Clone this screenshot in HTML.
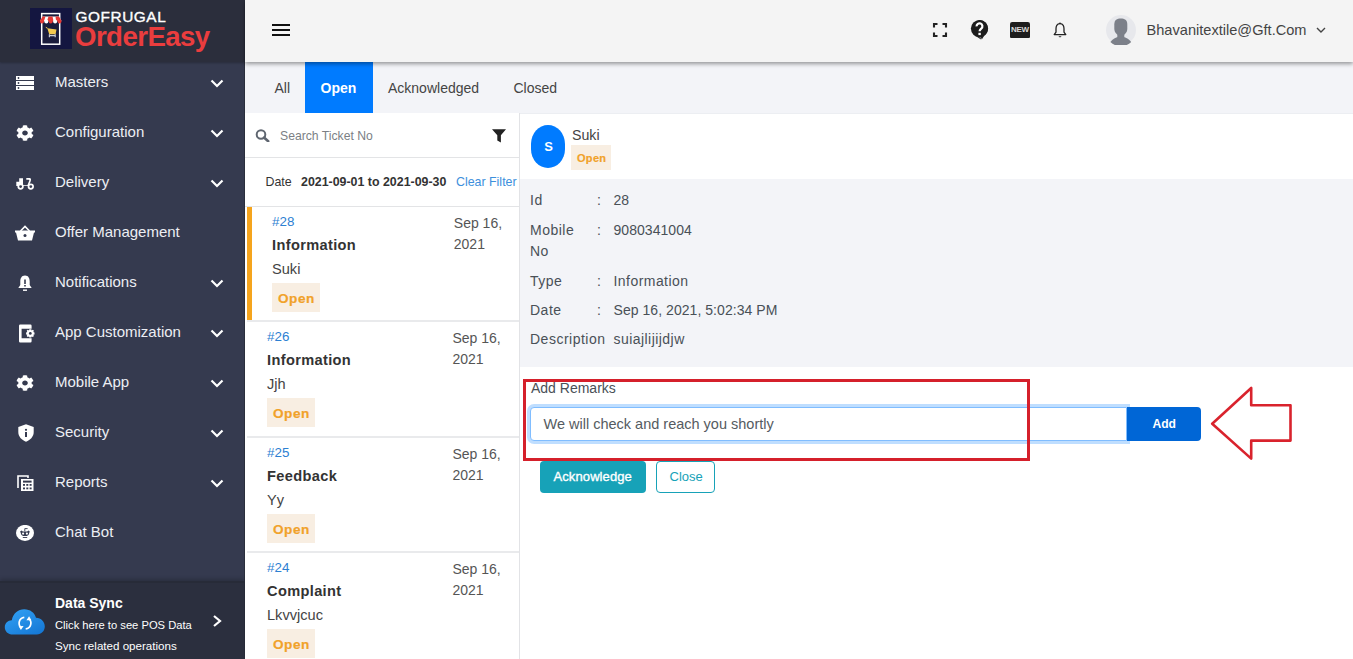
<!DOCTYPE html>
<html><head><meta charset="utf-8">
<style>
*{box-sizing:border-box;margin:0;padding:0}
html,body{width:1353px;height:659px;overflow:hidden;font-family:"Liberation Sans",sans-serif;background:#fff;color:#333;position:relative}
.t{position:absolute;line-height:1;white-space:nowrap;z-index:3}
svg{z-index:3}
#side{position:absolute;left:0;top:0;width:245px;height:659px;background:#353a4f;border-right:1px solid #2a2e3c}
#side .shd{position:absolute;left:0;top:0;width:244px;height:62px;background:#2b2e3c;box-shadow:0 1px 2px rgba(0,0,0,.25)}
.mi{position:absolute;left:0;width:244px;height:50px}
.mi svg.ic{position:absolute}
.mi svg.ch{position:absolute;left:210px;top:22px}
.ds{position:absolute;left:0;top:581px;width:244px;height:78px;background:#2b2f3e;border-top:2px solid #272b38;box-shadow:0 -2px 4px rgba(0,0,0,.2)}
#top{position:absolute;left:245px;top:0;width:1108px;height:62px;background:#f4f4f4;box-shadow:0 2px 4px rgba(0,0,0,.38);z-index:2}
#tabs{position:absolute;left:245px;top:62px;width:1108px;height:51px;background:#f3f4f8}
.opentab{position:absolute;left:305px;top:62px;width:68px;height:51px;background:#007bff}
#list{position:absolute;left:245px;top:113px;width:275px;height:546px;background:#fff;border-right:1px solid #e2e3e6}
.hl{position:absolute;left:245px;width:274px;height:1px;background:#e3e4e6}
.sep{position:absolute;left:247px;width:272px;height:2px;background:#e9eaec}
.obar{position:absolute;left:247px;width:5px;height:115px;background:#f5a41d}
.badge{position:absolute;background:#f8eee2}
#dhead{position:absolute;left:520px;top:113px;width:833px;height:66px;background:#fff;border-top:1px solid #eceef2}
#dinfo{position:absolute;left:520px;top:179px;width:833px;height:188px;background:#f3f4f8}
.avatar{position:absolute;left:530.5px;top:124.5px;width:34.5px;height:43.5px;border-radius:17px / 19px;background:#007bff}
.inp{position:absolute;left:530px;top:407px;width:597px;height:34px;border:1px solid #80bdff;border-radius:4px 0 0 4px;box-shadow:0 0 0 3px rgba(0,123,255,.25);background:#fff}
.addbtn{position:absolute;left:1127px;top:407px;width:74px;height:34px;background:#0066d6;border-radius:0 4px 4px 0}
.ackbtn{position:absolute;left:540px;top:461px;width:106px;height:31.5px;background:#17a2b8;border-radius:4px}
.closebtn{position:absolute;left:656px;top:461px;width:59px;height:31.5px;border:1px solid #17a2b8;border-radius:4px;background:#fff}
.redbox{position:absolute;left:522.5px;top:379px;width:507px;height:81.5px;border:3px solid #d5202b}

</style></head><body>
<div id="side">
<div class="shd"></div>
<svg style="position:absolute;left:30px;top:8px" width="42" height="41" viewBox="0 0 42 41">
<rect x="0" y="0" width="42" height="41" fill="#141640"/>
<rect x="11.7" y="5.6" width="18" height="30.6" fill="#1a1c3c" stroke="#fff" stroke-width="1.5"/>
<path d="M10 13 L12.5 8.5 H29 L31.5 13 Z" fill="#fff"/>
<path d="M10 13 L12.5 8.5 H15.5 L14 13 Z M17 13 L18.5 8.5 H22.5 L23.5 13 Z M26 13 L25.5 8.5 H29 L31.5 13 Z" fill="#e53935"/>
<circle cx="12" cy="13.5" r="2" fill="#e53935"/><circle cx="20.7" cy="13.5" r="2" fill="#e53935"/><circle cx="29.5" cy="13.5" r="2" fill="#e53935"/>
<circle cx="16.3" cy="13.5" r="2" fill="#fff"/><circle cx="25.1" cy="13.5" r="2" fill="#fff"/>
<path d="M15.8 19.3 L17.6 20.3" stroke="#f3c94f" stroke-width="1"/>
<path d="M17.3 20.2 L26.5 21.6 L25.6 26.2 H19.2 Z" fill="#f3c94f"/>
<path d="M19.4 26.2 V29.2 M25.2 26.2 V29.2 M18.8 27.6 H25.8" stroke="#c9cdd8" stroke-width="1.2" fill="none"/>
</svg>
<div class="t" style="left:75.5px;top:8.56px;font-size:15.4px;color:#fff;letter-spacing:0.55px;-webkit-text-stroke:0.35px #fff">GOFRUGAL</div>
<div class="t" style="left:75px;top:23.14px;font-size:27.6px;color:#ea3d3e;font-weight:bold;letter-spacing:-0.55px">OrderEasy</div>
<div class="mi" style="top:57px"><div class="t" style="left:55px;top:17.20px;font-size:15px;color:#eceef3">Masters</div><svg class="ic" style="left:16px;top:19px" width="18" height="14" viewBox="0 0 18 14"><rect x="0" y="0" width="18" height="4" fill="#fff"/><rect x="0" y="5" width="18" height="4" fill="#fff"/><rect x="0" y="10" width="18" height="4" fill="#fff"/><circle cx="2.5" cy="2" r="0.9" fill="#353a4f"/><circle cx="2.5" cy="7" r="0.9" fill="#353a4f"/><circle cx="2.5" cy="12" r="0.9" fill="#353a4f"/></svg><svg class="ch" width="14" height="9" viewBox="0 0 14 9"><path d="M1.5 1.5 L7 7 L12.5 1.5" fill="none" stroke="#fff" stroke-width="2.2"/></svg></div>
<div class="mi" style="top:107px"><div class="t" style="left:55px;top:17.20px;font-size:15px;color:#eceef3">Configuration</div><svg class="ic" style="left:16px;top:18px" width="18" height="16" viewBox="0 0 512 512" preserveAspectRatio="none"><path fill="#fff" d="M487.4 315.7l-42.6-24.6c4.3-23.2 4.3-47 0-70.2l42.6-24.6c4.9-2.8 7.1-8.6 5.5-14-11.1-35.6-30-67.8-54.7-94.6-3.8-4.1-10-5.1-14.8-2.3L380.8 110c-17.9-15.4-38.5-27.3-60.8-35.1V25.8c0-5.6-3.9-10.5-9.4-11.7-36.7-8.2-74.3-7.8-109.2 0-5.5 1.2-9.4 6.1-9.4 11.7V75c-22.2 7.9-42.8 19.8-60.8 35.1L88.7 85.5c-4.9-2.8-11-1.900-14.8 2.300-24.7 26.7-43.600 58.900-54.700 94.600-1.700 5.400.600 11.200 5.500 14L67.300 221c-4.300 23.200-4.300 47 0 70.200l-42.600 24.600c-4.900 2.800-7.100 8.600-5.500 14 11.100 35.600 30 67.800 54.700 94.600 3.800 4.100 10 5.100 14.800 2.300l42.600-24.600c17.900 15.400 38.500 27.300 60.800 35.100v49.200c0 5.600 3.900 10.500 9.400 11.700 36.700 8.200 74.300 7.800 109.200 0 5.500-1.200 9.400-6.100 9.400-11.700v-49.200c22.200-7.900 42.800-19.800 60.800-35.100l42.600 24.600c4.900 2.800 11 1.900 14.800-2.300 24.700-26.700 43.600-58.900 54.700-94.600 1.500-5.500-.7-11.300-5.600-14.100zM256 336c-44.100 0-80-35.900-80-80s35.900-80 80-80 80 35.900 80 80-35.900 80-80 80z"/></svg><svg class="ch" width="14" height="9" viewBox="0 0 14 9"><path d="M1.5 1.5 L7 7 L12.5 1.5" fill="none" stroke="#fff" stroke-width="2.2"/></svg></div>
<div class="mi" style="top:157px"><div class="t" style="left:55px;top:17.20px;font-size:15px;color:#eceef3">Delivery</div><svg class="ic" style="left:16px;top:20px" width="19" height="13" viewBox="0 0 19 13"><path d="M0.3 4.8 H3.2 V1.2 H7 V8.2 H11.4 L13.3 3.6 Q13.5 2.7 12.6 2.7 H10.3 V1 H13.6 Q15.6 1 14.8 3.9 L12.9 9 H0.3 Z" fill="#fff"/><circle cx="4.6" cy="9.6" r="2.3" fill="#353a4f" stroke="#fff" stroke-width="1.7"/><circle cx="14.8" cy="9.6" r="2.3" fill="#353a4f" stroke="#fff" stroke-width="1.7"/></svg><svg class="ch" width="14" height="9" viewBox="0 0 14 9"><path d="M1.5 1.5 L7 7 L12.5 1.5" fill="none" stroke="#fff" stroke-width="2.2"/></svg></div>
<div class="mi" style="top:207px"><div class="t" style="left:55px;top:17.20px;font-size:15px;color:#eceef3">Offer Management</div><svg class="ic" style="left:15px;top:17.5px" width="20" height="16" viewBox="0 0 20 16"><path d="M5.5 6 L10 1.5 L14.5 6" fill="none" stroke="#fff" stroke-width="1.6"/><path d="M0 5.5 H20 V7.5 H19 L17 15.5 H3 L1 7.5 H0 Z" fill="#fff"/><circle cx="10" cy="10.5" r="1.5" fill="#353a4f"/></svg></div>
<div class="mi" style="top:257px"><div class="t" style="left:55px;top:17.20px;font-size:15px;color:#eceef3">Notifications</div><svg class="ic" style="left:18px;top:17.5px" width="14" height="17" viewBox="0 0 14 17"><path d="M7 0.5 C3.5 0.5 2.3 3.5 2.3 6.5 V10 L0.3 13 H13.7 L11.7 10 V6.5 C11.7 3.5 10.5 0.5 7 0.5 Z" fill="#fff"/><rect x="6.2" y="4.5" width="1.6" height="4.5" fill="#353a4f"/><rect x="6.2" y="10" width="1.6" height="1.5" fill="#353a4f"/><rect x="5" y="14.5" width="4" height="1.4" fill="#fff"/></svg><svg class="ch" width="14" height="9" viewBox="0 0 14 9"><path d="M1.5 1.5 L7 7 L12.5 1.5" fill="none" stroke="#fff" stroke-width="2.2"/></svg></div>
<div class="mi" style="top:307px"><div class="t" style="left:55px;top:17.20px;font-size:15px;color:#eceef3">App Customization</div><svg class="ic" style="left:18.5px;top:16.5px" width="17" height="19" viewBox="0 0 17 19"><path fill-rule="evenodd" d="M1.2 0.5 H11.4 Q12.6 0.5 12.6 1.7 V17.3 Q12.6 18.5 11.4 18.5 H1.2 Q0 18.5 0 17.3 V1.7 Q0 0.5 1.2 0.5 Z M2.6 4.7 H12.6 V14.25 H2.6 Z" fill="#fff"/><g transform="translate(11.3 9.4)"><path d="M-1 -4.2 H1 L1.3 -3 L2.6 -3.6 L3.6 -2.6 L3 -1.3 L4.2 -1 V1 L3 1.3 L3.6 2.6 L2.6 3.6 L1.3 3 L1 4.2 H-1 L-1.3 3 L-2.6 3.6 L-3.6 2.6 L-3 1.3 L-4.2 1 V-1 L-3 -1.3 L-3.6 -2.6 L-2.6 -3.6 L-1.3 -3 Z" fill="#fff"/><circle r="1.4" fill="#353a4f"/></g></svg><svg class="ch" width="14" height="9" viewBox="0 0 14 9"><path d="M1.5 1.5 L7 7 L12.5 1.5" fill="none" stroke="#fff" stroke-width="2.2"/></svg></div>
<div class="mi" style="top:357px"><div class="t" style="left:55px;top:17.20px;font-size:15px;color:#eceef3">Mobile App</div><svg class="ic" style="left:16px;top:18px" width="18" height="16" viewBox="0 0 512 512" preserveAspectRatio="none"><path fill="#fff" d="M487.4 315.7l-42.6-24.6c4.3-23.2 4.3-47 0-70.2l42.6-24.6c4.9-2.8 7.1-8.6 5.5-14-11.1-35.6-30-67.8-54.7-94.6-3.8-4.1-10-5.1-14.8-2.3L380.8 110c-17.9-15.4-38.5-27.3-60.8-35.1V25.8c0-5.6-3.9-10.5-9.4-11.7-36.7-8.2-74.3-7.8-109.2 0-5.5 1.2-9.4 6.1-9.4 11.7V75c-22.2 7.9-42.8 19.8-60.8 35.1L88.7 85.5c-4.9-2.8-11-1.9-14.8 2.3-24.7 26.7-43.6 58.9-54.7 94.6-1.7 5.4.6 11.2 5.5 14L67.3 221c-4.3 23.2-4.3 47 0 70.2l-42.6 24.6c-4.9 2.8-7.1 8.6-5.5 14 11.1 35.6 30 67.8 54.7 94.6 3.8 4.1 10 5.1 14.8 2.3l42.6-24.6c17.9 15.4 38.5 27.3 60.8 35.1v49.2c0 5.6 3.9 10.5 9.4 11.7 36.7 8.2 74.3 7.8 109.2 0 5.5-1.2 9.4-6.1 9.4-11.7v-49.2c22.2-7.9 42.8-19.8 60.8-35.1l42.6 24.6c4.9 2.8 11 1.9 14.8-2.3 24.7-26.7 43.6-58.9 54.7-94.6 1.5-5.5-.7-11.3-5.6-14.1zM256 336c-44.1 0-80-35.9-80-80s35.9-80 80-80 80 35.9 80 80-35.9 80-80 80z"/></svg><svg class="ch" width="14" height="9" viewBox="0 0 14 9"><path d="M1.5 1.5 L7 7 L12.5 1.5" fill="none" stroke="#fff" stroke-width="2.2"/></svg></div>
<div class="mi" style="top:407px"><div class="t" style="left:55px;top:17.20px;font-size:15px;color:#eceef3">Security</div><svg class="ic" style="left:17.5px;top:16.5px" width="16" height="18" viewBox="0 0 16 18"><path d="M8 0.3 L15.7 3 V8 C15.7 12.5 12.5 16 8 17.7 C3.5 16 0.3 12.5 0.3 8 V3 Z" fill="#fff"/><circle cx="8" cy="5.8" r="1.1" fill="#353a4f"/><rect x="7" y="8" width="2" height="5" fill="#353a4f"/></svg><svg class="ch" width="14" height="9" viewBox="0 0 14 9"><path d="M1.5 1.5 L7 7 L12.5 1.5" fill="none" stroke="#fff" stroke-width="2.2"/></svg></div>
<div class="mi" style="top:457px"><div class="t" style="left:55px;top:17.20px;font-size:15px;color:#eceef3">Reports</div><svg class="ic" style="left:16.5px;top:17.5px" width="17" height="16" viewBox="0 0 17 16"><path d="M1 13 V1 H11 V3" fill="none" stroke="#fff" stroke-width="1.6"/><rect x="4" y="4" width="12.5" height="12" fill="#fff"/><rect x="6" y="9" width="2" height="1.8" fill="#353a4f"/><rect x="9.3" y="9" width="2" height="1.8" fill="#353a4f"/><rect x="12.6" y="9" width="2" height="1.8" fill="#353a4f"/><rect x="6" y="12.5" width="2" height="1.8" fill="#353a4f"/><rect x="9.3" y="12.5" width="2" height="1.8" fill="#353a4f"/><rect x="12.6" y="12.5" width="2" height="1.8" fill="#353a4f"/><rect x="6" y="5.6" width="8.6" height="2" fill="#353a4f"/></svg><svg class="ch" width="14" height="9" viewBox="0 0 14 9"><path d="M1.5 1.5 L7 7 L12.5 1.5" fill="none" stroke="#fff" stroke-width="2.2"/></svg></div>
<div class="mi" style="top:507px"><div class="t" style="left:55px;top:17.20px;font-size:15px;color:#eceef3">Chat Bot</div><svg class="ic" style="left:16px;top:18px" width="18" height="16" viewBox="0 0 18 16"><ellipse cx="9" cy="7.9" rx="9" ry="8" fill="#fff"/><path d="M4.1 6.4 L5.6 5.6 L6.8 6.5 H11.2 L12.4 5.6 L13.8 6.4 L13.2 8 Q13.2 11.1 9 11.1 Q4.8 11.1 4.8 8 Z" fill="#353a4f"/><circle cx="7.1" cy="8.6" r="1.1" fill="#fff"/><circle cx="10.9" cy="8.6" r="1.1" fill="#fff"/><path d="M6.8 12.5 H11.2" stroke="#353a4f" stroke-width="0.9"/><path d="M8.8 6.3 V3.6 H11.6" fill="none" stroke="#353a4f" stroke-width="0.9"/></svg>
</div>
<div class="ds"><svg style="position:absolute;left:4px;top:24.5px" width="42" height="28" viewBox="0 0 42 28">
<defs><linearGradient id="cg" x1="0" y1="0" x2="0.8" y2="1"><stop offset="0" stop-color="#33a3f6"/><stop offset="1" stop-color="#1679d6"/></linearGradient></defs>
<path d="M9 26.5 C3.8 26.5 0.8 23.3 0.8 19.2 C0.8 15.2 3.8 12.2 7.8 12.2 C9 5.6 14 1.3 20.3 1.3 C26.2 1.3 30.6 4.8 32 9.8 C37.2 10 40.8 13.8 40.8 18.6 C40.8 23 37.5 26.5 32.8 26.5 Z" fill="url(#cg)"/>
<path d="M20.3 9.3 A5.8 5.8 0 0 0 17.3 19.6" fill="none" stroke="#fff" stroke-width="1.7"/>
<path d="M21.7 20.9 A5.8 5.8 0 0 0 24.7 10.6" fill="none" stroke="#fff" stroke-width="1.7"/>
<path d="M14.6 18.2 L19.6 18.0 L16.9 22.0 Z" fill="#fff"/>
<path d="M27.4 12.2 L22.4 12.2 L25.1 8.2 Z" fill="#fff"/>
</svg>
<div class="t" style="left:55px;top:13.15px;font-size:14px;font-weight:bold;color:#fff">Data Sync</div>
<div class="t" style="left:55px;top:36.72px;font-size:11.2px;color:#fff">Click here to see POS Data</div>
<div class="t" style="left:55px;top:56.88px;font-size:11.6px;color:#fff">Sync related operations</div>
<svg style="position:absolute;left:212px;top:32px" width="11" height="12" viewBox="0 0 11 12"><path d="M2 1 L8 6 L2 11" fill="none" stroke="#fff" stroke-width="2.2"/></svg></div>
</div>
<div id="top"></div>
<svg style="position:absolute;left:265px;top:15px" width="30" height="30" viewBox="0 0 30 30">
<rect x="7" y="9" width="18" height="2" fill="#111"/><rect x="7" y="14" width="18" height="2" fill="#111"/><rect x="7" y="19" width="18" height="2" fill="#111"/>
</svg>
<svg style="position:absolute;left:930px;top:20px" width="20" height="20" viewBox="0 0 20 20">
<path d="M4 7.5 V4 H7.5 M12.5 4 H16 V7.5 M16 12.5 V16 H12.5 M7.5 16 H4 V12.5" fill="none" stroke="#222" stroke-width="2.1"/>
</svg>
<svg style="position:absolute;left:968px;top:18px" width="24" height="24" viewBox="0 0 24 24">
<path d="M11.5 2 A8.6 8.6 0 1 1 8.8 18.8 L13 21.5 L12.5 19 A8.6 8.6 0 0 1 11.5 2 Z" fill="#1d1d1d"/>
<circle cx="11.5" cy="10.6" r="8.6" fill="#1d1d1d"/>
<path d="M13.8 21.6 L12.6 18.5 L16 18 Z" fill="#1d1d1d"/>
<path d="M8.6 8.4 A2.9 2.9 0 1 1 13.4 10.4 C12.2 11.4 11.6 11.8 11.6 13.3" fill="none" stroke="#fff" stroke-width="2.2"/>
<rect x="10.4" y="14.8" width="2.4" height="2.3" fill="#fff"/>
</svg>
<svg style="position:absolute;left:1010px;top:21.5px" width="20" height="16.5" viewBox="0 0 20 16.5">
<rect x="0" y="0" width="20" height="16.5" rx="2.2" fill="#1d1d1d"/>
<text x="10" y="10.3" font-family="Liberation Sans" font-weight="bold" font-size="8" fill="#d8d8d8" text-anchor="middle" letter-spacing="-0.3">NEW</text>
</svg>
<svg style="position:absolute;left:1052px;top:22px" width="16" height="17" viewBox="0 0 16 17">
<path d="M8 1.6 C4.8 1.6 4 4.2 4 6.8 V10.2 L2.2 12.6 H13.8 L12 10.2 V6.8 C12 4.2 11.2 1.6 8 1.6 Z" fill="none" stroke="#222" stroke-width="1.3" stroke-linejoin="round"/>
<path d="M6.3 14.2 H9.7 L8 15.6 Z" fill="#222"/>
<rect x="7.3" y="0.6" width="1.4" height="1.5" fill="#222"/>
</svg>
<svg style="position:absolute;left:1106px;top:15px" width="30" height="30" viewBox="0 0 30 30">
<circle cx="15" cy="15" r="15" fill="#e7e8ec"/>
<path d="M8.3 9.5 C8.3 4.8 11 3.5 14.8 3.5 C18.6 3.5 21.3 4.8 21.3 9.5 V13.5 C21.3 17.8 18.5 20.5 14.8 20.5 C11.1 20.5 8.3 17.8 8.3 13.5 Z" fill="#7c8089"/>
<rect x="11.3" y="17" width="7" height="6" fill="#7c8089"/>
<path d="M4.4 27 C6.5 24 10 22.5 12 22 H17.6 C19.6 22.5 23.1 24 25.2 27 A15 15 0 0 1 4.4 27 Z" fill="#7c8089"/>
</svg>
<div class="t" style="left:1146.5px;top:22.84px;font-size:14.6px;color:#444">Bhavanitextile@Gft.Com</div>
<svg style="position:absolute;left:1316px;top:27px" width="10" height="6" viewBox="0 0 10 6"><path d="M1 1 L5 5 L9 1" fill="none" stroke="#444" stroke-width="1.4"/></svg>
<div id="tabs"></div>
<div class="opentab"></div>
<div class="t" style="left:274.5px;top:81.15px;font-size:14px;color:#444">All</div>
<div class="t" style="left:320.5px;top:81.15px;font-size:14px;color:#fff;font-weight:bold">Open</div>
<div class="t" style="left:388px;top:81.15px;font-size:14px;color:#444">Acknowledged</div>
<div class="t" style="left:513.5px;top:81.15px;font-size:14px;color:#444">Closed</div>
<div id="list"></div>
<svg style="position:absolute;left:255px;top:129px" width="15" height="13" viewBox="0 0 15 13"><circle cx="6" cy="5.5" r="4.3" fill="none" stroke="#5f6670" stroke-width="2"/><path d="M9 8.6 L13.2 12.3" stroke="#5f6670" stroke-width="2.6" stroke-linecap="round"/></svg>
<div class="t" style="left:280px;top:129.67px;font-size:12.2px;color:#7b7f85">Search Ticket No</div>
<svg style="position:absolute;left:492px;top:129px" width="15" height="14" viewBox="0 0 15 14"><path d="M0 0.3 H14 L8.9 6.3 V13.6 L5.3 11.6 V6.3 Z" fill="#222"/></svg>
<div class="hl" style="top:157px"></div>
<div class="t" style="left:265.5px;top:175.50px;font-size:12.4px;color:#333">Date</div>
<div class="t" style="left:301px;top:175.50px;font-size:12.4px;color:#333;font-weight:bold">2021-09-01 to 2021-09-30</div>
<div class="t" style="left:456px;top:175.50px;font-size:12.4px;color:#3d8fdc">Clear Filter</div>
<div class="hl" style="top:206px"></div>
<div class="obar" style="top:207px"></div>
<div class="sep" style="top:320px"></div>
<div class="t" style="left:272px;top:215.16px;font-size:13.4px;color:#2d80d2">#28</div>
<div class="t" style="left:272px;top:237.84px;font-size:14.6px;color:#333;font-weight:bold;letter-spacing:0.35px">Information</div>
<div class="t" style="left:272px;top:261.84px;font-size:14.6px;color:#444">Suki</div>
<div class="badge" style="left:272px;top:283px;width:48px;height:28.5px"></div>
<div class="t" style="left:278px;top:291.79px;font-size:13.6px;color:#f1a22a;font-weight:bold;letter-spacing:0.5px;-webkit-text-stroke:0.2px #f1a22a">Open</div>
<div class="t" style="left:453.8px;top:215.85px;font-size:14px;color:#555">Sep 16,</div>
<div class="t" style="left:453.8px;top:236.95px;font-size:14px;color:#555">2021</div>
<div class="sep" style="top:436px"></div>
<div class="t" style="left:267px;top:330.16px;font-size:13.4px;color:#2d80d2">#26</div>
<div class="t" style="left:267px;top:352.84px;font-size:14.6px;color:#333;font-weight:bold;letter-spacing:0.35px">Information</div>
<div class="t" style="left:267px;top:376.84px;font-size:14.6px;color:#444">Jjh</div>
<div class="badge" style="left:267px;top:398px;width:48px;height:28.5px"></div>
<div class="t" style="left:273px;top:406.79px;font-size:13.6px;color:#f1a22a;font-weight:bold;letter-spacing:0.5px;-webkit-text-stroke:0.2px #f1a22a">Open</div>
<div class="t" style="left:452.5px;top:330.85px;font-size:14px;color:#555">Sep 16,</div>
<div class="t" style="left:452.5px;top:351.95px;font-size:14px;color:#555">2021</div>
<div class="sep" style="top:551px"></div>
<div class="t" style="left:267px;top:446.16px;font-size:13.4px;color:#2d80d2">#25</div>
<div class="t" style="left:267px;top:468.84px;font-size:14.6px;color:#333;font-weight:bold;letter-spacing:0.35px">Feedback</div>
<div class="t" style="left:267px;top:492.84px;font-size:14.6px;color:#444">Yy</div>
<div class="badge" style="left:267px;top:514px;width:48px;height:28.5px"></div>
<div class="t" style="left:273px;top:522.79px;font-size:13.6px;color:#f1a22a;font-weight:bold;letter-spacing:0.5px;-webkit-text-stroke:0.2px #f1a22a">Open</div>
<div class="t" style="left:452.5px;top:446.85px;font-size:14px;color:#555">Sep 16,</div>
<div class="t" style="left:452.5px;top:467.95px;font-size:14px;color:#555">2021</div>
<div class="sep" style="top:667px"></div>
<div class="t" style="left:267px;top:561.16px;font-size:13.4px;color:#2d80d2">#24</div>
<div class="t" style="left:267px;top:583.84px;font-size:14.6px;color:#333;font-weight:bold;letter-spacing:0.35px">Complaint</div>
<div class="t" style="left:267px;top:607.84px;font-size:14.6px;color:#444">Lkvvjcuc</div>
<div class="badge" style="left:267px;top:629px;width:48px;height:28.5px"></div>
<div class="t" style="left:273px;top:637.79px;font-size:13.6px;color:#f1a22a;font-weight:bold;letter-spacing:0.5px;-webkit-text-stroke:0.2px #f1a22a">Open</div>
<div class="t" style="left:452.5px;top:561.85px;font-size:14px;color:#555">Sep 16,</div>
<div class="t" style="left:452.5px;top:582.95px;font-size:14px;color:#555">2021</div>
<div id="dhead"></div><div id="dinfo"></div>
<div class="avatar"></div>
<div class="t" style="left:544.3px;top:140.00px;font-size:13px;color:#fff;font-weight:bold">S</div>
<div class="t" style="left:572px;top:127.98px;font-size:14.2px;color:#444">Suki</div>
<div class="badge" style="left:571px;top:145px;width:40px;height:25px"></div>
<div class="t" style="left:577px;top:152.99px;font-size:11px;color:#f1a22a;font-weight:bold;letter-spacing:0.3px;-webkit-text-stroke:0.2px #f1a22a">Open</div>
<div class="t" style="left:530px;top:193.45px;font-size:14px;color:#495057;letter-spacing:0.5px">Id</div>
<div class="t" style="left:597px;top:193.45px;font-size:14px;color:#495057">:</div>
<div class="t" style="left:613.5px;top:193.45px;font-size:14px;color:#495057;letter-spacing:0.05px">28</div>
<div class="t" style="left:530px;top:223.05px;font-size:14px;color:#495057;letter-spacing:0.5px">Mobile</div>
<div class="t" style="left:597px;top:223.05px;font-size:14px;color:#495057">:</div>
<div class="t" style="left:613.5px;top:223.05px;font-size:14px;color:#495057;letter-spacing:0.05px">9080341004</div>
<div class="t" style="left:530px;top:243.95px;font-size:14px;color:#495057;letter-spacing:0.5px">No</div>
<div class="t" style="left:530px;top:274.05px;font-size:14px;color:#495057;letter-spacing:0.5px">Type</div>
<div class="t" style="left:597px;top:274.05px;font-size:14px;color:#495057">:</div>
<div class="t" style="left:613.5px;top:274.05px;font-size:14px;color:#495057;letter-spacing:0.45px">Information</div>
<div class="t" style="left:530px;top:303.15px;font-size:14px;color:#495057;letter-spacing:0.5px">Date</div>
<div class="t" style="left:597px;top:303.15px;font-size:14px;color:#495057">:</div>
<div class="t" style="left:613.5px;top:303.15px;font-size:14px;color:#495057;letter-spacing:0.05px">Sep 16, 2021, 5:02:34 PM</div>
<div class="t" style="left:530px;top:331.85px;font-size:14px;color:#495057;letter-spacing:0.5px">Description</div>
<div class="t" style="left:613.5px;top:331.85px;font-size:14px;color:#495057;letter-spacing:0.45px">suiajlijijdjw</div>
<div class="t" style="left:531px;top:381.15px;font-size:14px;color:#495057">Add Remarks</div>
<div class="inp"></div>
<div class="t" style="left:543.5px;top:417.33px;font-size:14.5px;color:#555b61">We will check and reach you shortly</div>
<div class="addbtn"></div>
<div class="t" style="left:1152.5px;top:417.56px;font-size:12.1px;color:#fff;font-weight:bold">Add</div>
<div class="ackbtn"></div>
<div class="t" style="left:553.5px;top:470.00px;font-size:13px;color:#fff;-webkit-text-stroke:0.35px #fff;letter-spacing:0.1px">Acknowledge</div>
<div class="closebtn"></div>
<div class="t" style="left:669.5px;top:470.00px;font-size:13px;color:#17a2b8">Close</div>
<div class="redbox"></div>
<svg style="position:absolute;left:0;top:0" width="1353" height="659"><path d="M1212.2 423.7 L1251.2 388 V405.3 H1290.5 V440.6 H1251.2 V458.6 Z" fill="none" stroke="#d9232d" stroke-width="2.6" stroke-linejoin="round"/></svg>
</body></html>
